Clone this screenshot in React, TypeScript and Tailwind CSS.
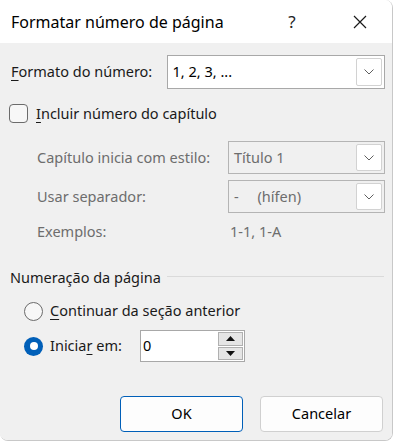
import React, { useState } from 'react';

const font = { fontFamily: '"Segoe UI", "Noto Sans", Arial, sans-serif' };

function Chevron() {
  return (
    <svg width="10" height="6" viewBox="0 0 10 6" fill="none">
      <path d="M0.5 0.5 L5 5 L9.5 0.5" stroke="#5f5f5f" strokeWidth="1" />
    </svg>
  );
}

function Select({ value, disabled, className }: { value: string; disabled?: boolean; className: string }) {
  return (
    <div
      className={`flex items-center border ${
        disabled ? 'bg-[#f0f0f0] border-[#b4b4b4] text-[#6d6d6d]' : 'bg-white border-[#a8a8a8] text-black'
      } ${className}`}
    >
      <span className="flex-1 pl-[5px] whitespace-pre">{value}</span>
      <div className="mr-[2px] w-[26px] h-[calc(100%-4px)] bg-white border border-[#d2d2d2] rounded-[2px] flex items-center justify-center">
        <Chevron />
      </div>
    </div>
  );
}

function Mn({ children }: { children: React.ReactNode }) {
  return <span className="underline underline-offset-[3px] decoration-1">{children}</span>;
}

export default function App() {
  const [start, setStart] = useState('0');

  return (
    <div className="w-[393px] h-[441px] bg-white" style={font}>
      <div className="w-full h-full rounded-[8px] overflow-hidden border-r border-b border-[#c8c8c8] flex flex-col text-[14.5px] text-[#1a1a1a]">
        {/* Title bar */}
        <div className="h-[43px] bg-white flex items-center pl-[11px] shrink-0">
          <span className="flex-1 text-[16px] text-black">Formatar número de página</span>
          <span className="w-[30px] text-center text-[17px] text-[#222] mr-[46px]">?</span>
          <svg width="14" height="14" viewBox="0 0 14 14" className="mr-[25px]">
            <path d="M1 1 L13 13 M13 1 L1 13" stroke="#1a1a1a" strokeWidth="1.2" />
          </svg>
        </div>

        {/* Body */}
        <div className="flex-1 bg-[#f0f0f0] flex flex-col">
          <div className="mt-[12px] h-[34px] flex items-center pl-[11px] pr-[7px]">
            <span className="w-[156px]">
              <Mn>F</Mn>ormato do número:
            </span>
            <Select value="1, 2, 3, ..." className="w-[219px] h-[34px]" />
          </div>

          <div className="mt-[15px] h-[19px] flex items-center pl-[9px]">
            <div className="w-[19px] h-[19px] rounded-[4px] border border-[#6b6b6b] bg-[#f7f7f7]" />
            <span className="ml-[8px]">
              <Mn>I</Mn>ncluir número do capítulo
            </span>
          </div>

          <div className="mt-[18px] h-[33px] flex items-center pl-[37px] text-[#6d6d6d]">
            <span className="w-[191px]">Capítulo inicia com estilo:</span>
            <Select value="Título 1" disabled className="w-[157px] h-[33px]" />
          </div>

          <div className="mt-[6px] h-[33px] flex items-center pl-[37px] text-[#6d6d6d]">
            <span className="w-[191px]">Usar separador:</span>
            <Select value={'-     (hífen)'} disabled className="w-[157px] h-[33px]" />
          </div>

          <div className="mt-[9px] h-[20px] flex items-center pl-[37px] text-[#6d6d6d]">
            <span className="w-[193px]">Exemplos:</span>
            <span>1-1, 1-A</span>
          </div>

          <div className="mt-[26px] h-[20px] flex items-center pl-[10px] pr-[8px]">
            <span className="w-[157px]">Numeração da página</span>
            <div className="flex-1 h-px bg-[#dadada] -mt-[3px]" />
          </div>

          <div className="mt-[13px] h-[20px] flex items-center pl-[24px]">
            <div className="w-[19px] h-[19px] rounded-full border border-[#6b6b6b] bg-[#f7f7f7]" />
            <span className="ml-[7px]">
              <Mn>C</Mn>ontinuar da seção anterior
            </span>
          </div>

          <div className="mt-[9px] h-[32px] flex items-center pl-[24px]">
            <div className="w-[19px] h-[19px] rounded-full bg-[#005fb8] flex items-center justify-center">
              <div className="w-[8px] h-[8px] rounded-full bg-white" />
            </div>
            <span className="ml-[7px] w-[90px]">
              Inicia<Mn>r</Mn> em:
            </span>
            <div className="w-[105px] h-[32px] bg-white border border-[#a8a8a8] flex items-center">
              <input
                value={start}
                onChange={(e) => setStart(e.target.value)}
                className="flex-1 min-w-0 pl-[2px] outline-none bg-transparent text-[14.5px] text-black"
              />
              <div className="w-[25px] h-[28px] mr-[1px] flex flex-col gap-px">
                <div className="flex-1 bg-[#e5e5e5] border border-[#b0b0b0] flex items-center justify-center">
                  <svg width="9" height="5" viewBox="0 0 9 5">
                    <path d="M0 5 L4.5 0 L9 5 Z" fill="#111" />
                  </svg>
                </div>
                <div className="flex-1 bg-[#e5e5e5] border border-[#b0b0b0] flex items-center justify-center">
                  <svg width="9" height="5" viewBox="0 0 9 5">
                    <path d="M0 0 L4.5 5 L9 0 Z" fill="#111" />
                  </svg>
                </div>
              </div>
            </div>
          </div>

          <div className="mt-[34px] flex pl-[120px] gap-[17px]">
            <button className="w-[123px] h-[36px] bg-[#fdfdfd] border border-[#005fb8] rounded-[4px] text-black text-[14.5px]">
              OK
            </button>
            <button className="w-[123px] h-[36px] bg-[#fdfdfd] border border-[#d0d0d0] rounded-[4px] text-black text-[14.5px]">
              Cancelar
            </button>
          </div>
        </div>
      </div>
    </div>
  );
}
